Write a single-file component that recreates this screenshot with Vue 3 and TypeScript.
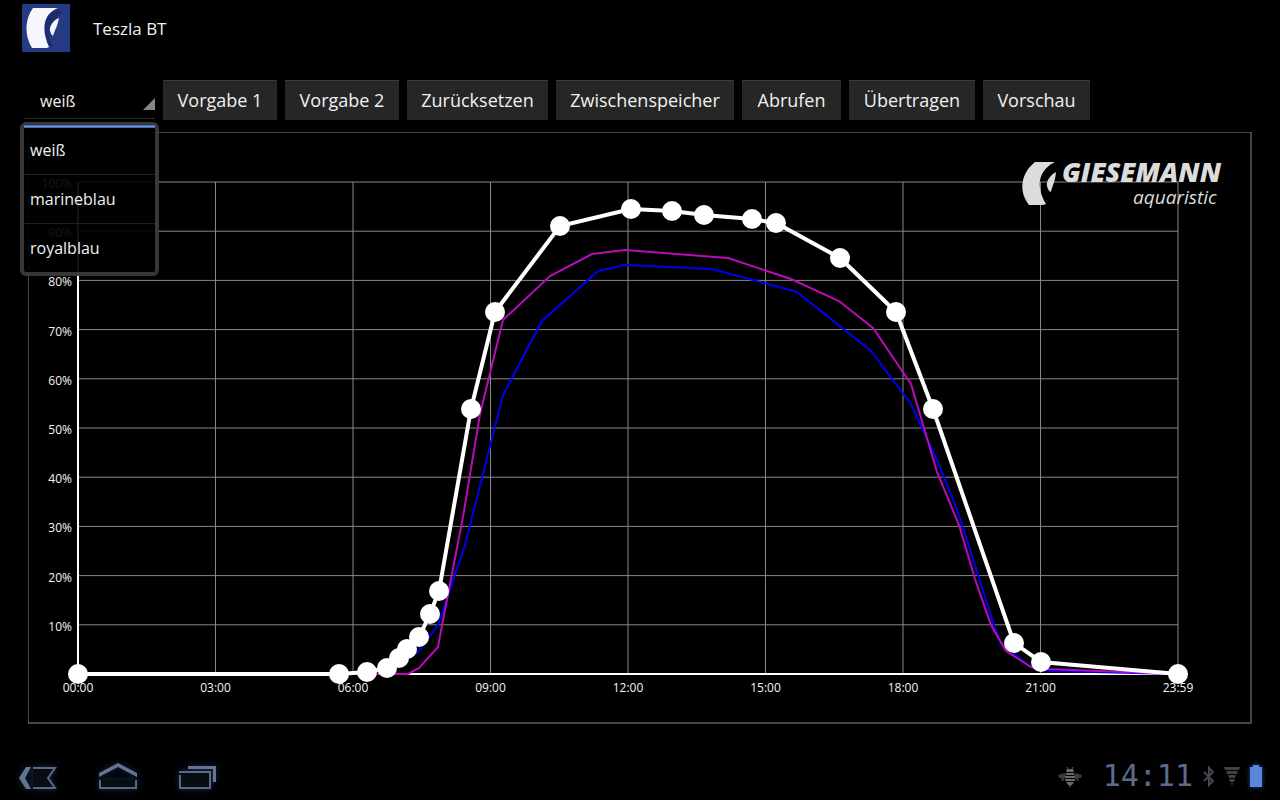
<script setup lang="ts">
import { ref } from 'vue'

type Point = [number, number]

const channels = ['weiß', 'marineblau', 'royalblau']
const selected = ref('weiß')
const open = ref(true)

const actions = [
  'Vorgabe 1',
  'Vorgabe 2',
  'Zurücksetzen',
  'Zwischenspeicher',
  'Abrufen',
  'Übertragen',
  'Vorschau',
]

// Plot area inside the 1224 x 592 chart surface
const left = 50
const top = 50
const plotWidth = 1100
const plotHeight = 492

const hours = ['00:00', '03:00', '06:00', '09:00', '12:00', '15:00', '18:00', '21:00', '23:59']
const columns = hours.map((label, i) => ({ label, x: left + (plotWidth / 8) * i }))
const rows = Array.from({ length: 10 }, (_, i) => ({
  label: `${100 - i * 10}%`,
  y: top + (plotHeight / 10) * i,
}))

const white: Point[] = [
  [50, 542], [311, 542], [339, 540], [359, 536], [371, 526], [379, 517], [391, 505],
  [402, 482], [411, 459], [443, 277], [467, 180], [532, 94], [603, 77], [644, 79],
  [676, 83], [724, 87], [748, 91], [812, 126], [868, 180], [905, 277], [986, 511],
  [1013, 530], [1150, 542],
]
const marine: Point[] = [
  [50, 542], [339, 541], [371, 530], [389, 521], [410, 493], [437, 413], [475, 263],
  [514, 189], [570, 139], [597, 133], [684, 137], [769, 160], [843, 219], [883, 272],
  [909, 328], [930, 380], [965, 490], [973, 512], [1003, 535], [1022, 539], [1150, 542],
]
const royal: Point[] = [
  [50, 542], [380, 542], [391, 536], [410, 515], [416, 483], [435, 385], [452, 282],
  [475, 188], [522, 144], [564, 122], [597, 118], [700, 126], [763, 147], [811, 169],
  [845, 196], [883, 252], [909, 340], [931, 393], [947, 447], [963, 493], [978, 519],
  [1003, 535], [1018, 537], [1150, 542],
]

const line = (points: Point[]) => points.map((p) => p.join(',')).join(' ')

function pick(name: string) {
  selected.value = name
  open.value = false
}
</script>

<template>
  <div class="app">
    <header class="header">
      <svg class="app-icon" viewBox="0 0 48 48" aria-hidden="true">
        <rect width="48" height="48" fill="#263a83" />
        <path d="M36 5C22 11 19 24 28 43L31 42C24 30 26 19 40 9Z" fill="#1d2c6a" />
        <path d="M11 4H36C23 9 18 22 27 43Q26 44 24 44H10C2 31 3 15 11 4Z" fill="#f5f7fc" />
        <path d="M37 14C31 16 27 23 28 27Q29 31 31 32C33 25 35 24 37 14Z" fill="#f5f7fc" />
      </svg>
      <h1 class="title">Teszla BT</h1>
    </header>

    <div class="toolbar">
      <div class="spinner">
        <select v-model="selected" class="spinner-select" aria-label="Kanal" @mousedown.prevent="open = !open">
          <option v-for="name in channels" :key="name" :value="name">{{ name }}</option>
        </select>
        <div v-if="open" class="menu">
          <button v-for="name in channels" :key="name" type="button" class="menu-item" @click="pick(name)">
            {{ name }}
          </button>
        </div>
      </div>
      <button v-for="action in actions" :key="action" type="button" class="action">{{ action }}</button>
    </div>

    <main class="main">
      <svg class="chart" viewBox="0 0 1224 592" role="img" aria-label="Tagesverlauf">
        <rect class="grid" width="1223" height="591" />
        <line v-for="c in columns" :key="c.label" class="grid" :x1="c.x" :x2="c.x" :y1="top" :y2="top + plotHeight" />
        <line v-for="r in rows" :key="r.label" class="grid" :x1="left" :x2="left + plotWidth" :y1="r.y" :y2="r.y" />
        <g class="brand">
          <path d="M1007 30H1027C1011 38 1007 53 1018 72L1015 73H1001C990 59 993 41 1007 30Z" />
          <path d="M1028 40C1021 44 1018 50 1019 54Q1020 59 1023 60C1024 54 1027 51 1028 40Z" />
          <text class="brand-name" x="1034" y="50">GIESEMANN</text>
          <text class="brand-sub" x="1105" y="72">aquaristic</text>
        </g>
        <text v-for="r in rows" :key="r.label" class="label row-label" :x="left - 6" :y="r.y + 6">{{ r.label }}</text>
        <text v-for="c in columns" :key="c.label" class="label column-label" :x="c.x" :y="top + plotHeight + 18">{{ c.label }}</text>
        <polyline class="axis" points="50,50 50,542 1150,542" />
        <polyline class="curve marine" :points="line(marine)" />
        <polyline class="curve royal" :points="line(royal)" />
        <polyline class="curve white" :points="line(white)" />
        <circle v-for="([x, y], i) in white" :key="i" :cx="x" :cy="y" r="10" fill="#fff" />
      </svg>
    </main>

    <footer class="system-bar">
      <nav class="keys">
        <button type="button" class="key" aria-label="Zurück">
          <svg viewBox="0 0 48 48">
            <path class="solid" d="M12 15H17L11 26L17 37H12L5 26Z" />
            <path class="outline" d="M19 16H41L34 26L41 36H19" />
          </svg>
        </button>
        <button type="button" class="key" aria-label="Startseite">
          <svg viewBox="0 0 48 48">
            <path class="solid" d="M24 11L43 21V25L24 15L5 25V21Z" />
            <path class="outline" d="M6 28V36H42V28" />
          </svg>
        </button>
        <button type="button" class="key" aria-label="Letzte Apps">
          <svg viewBox="0 0 48 48">
            <path class="solid" d="M14 14H42V30H39V17H14Z" />
            <path class="outline" d="M5 20H36V36H6V23" />
          </svg>
        </button>
      </nav>
      <div class="status">
        <svg class="bee" viewBox="0 0 24 24" aria-hidden="true">
          <path d="M9 3L10 5M15 3L14 5" stroke="#5a5d61" stroke-width="1" />
          <path d="M9 5H15L16 8H8Z" fill="#66696d" />
          <path d="M7 9L0 11L1 14H4L3 17H5L8 12ZM17 9L24 11L23 14H20L21 17H19L16 12Z" fill="#393b3e" />
          <path d="M8 9H16V11H8ZM7 12H17V14H7ZM7 15H17V17H7ZM8 18H16L14 21H13L12 24L11 21H10Z" fill="#66696d" />
        </svg>
        <time class="clock">14:11</time>
        <svg class="bluetooth" viewBox="0 0 14 24" aria-hidden="true">
          <path d="M3 8L12 17L8 21V4L12 8L3 17" fill="none" stroke="#45484e" stroke-width="2" />
        </svg>
        <svg class="signal" viewBox="0 0 18 24" aria-hidden="true">
          <path d="M1 3H17L16 6H2ZM3 7H15L14 10H4ZM5 11H13L12 14H6ZM6 15H12L11 18H7ZM8 19H10L9 22Z" fill="#3e4044" />
        </svg>
        <svg class="battery" viewBox="0 0 14 24" aria-hidden="true">
          <path d="M4 1H10V3H13V23H1V3H4Z" fill="#5e86d8" />
        </svg>
      </div>
    </footer>
  </div>
</template>

<style>
body {
  margin: 0;
  background: #000;
}
</style>

<style scoped>
.app {
  display: flex;
  flex-direction: column;
  min-height: 100vh;
  background: #000;
  color: #f0f0f0;
  font-family: "Open Sans", "Noto Sans", sans-serif;
}

button,
select {
  margin: 0;
  border: 0;
  border-radius: 0;
  background: none;
  color: inherit;
  font-family: inherit;
}

.header {
  display: flex;
  align-items: center;
  gap: 23px;
  height: 56px;
  padding: 0 22px;
}

.app-icon {
  width: 48px;
  height: 48px;
}

.title {
  margin: 0;
  font-size: 17px;
  font-weight: 400;
}

.toolbar {
  display: grid;
  grid-template-columns: 131px 114px 114px 141px 178px 99px 126px 107px;
  gap: 8px;
  margin-top: 24px;
  padding: 0 24px;
}

.spinner {
  position: relative;
  height: 40px;
}

.spinner::after {
  content: "";
  position: absolute;
  right: 0;
  bottom: 10px;
  border-left: 12px solid transparent;
  border-bottom: 12px solid #858585;
  pointer-events: none;
}

.spinner-select {
  appearance: none;
  width: 100%;
  height: 39px;
  padding: 4px 16px 0;
  border-bottom: 1px solid #2c2c2c;
  font-size: 16px;
}

.spinner-select option {
  background: #000;
}

.menu {
  position: absolute;
  top: 42px;
  left: -4px;
  right: -4px;
  z-index: 1;
  padding-top: 1px;
  border: 4px solid rgba(58, 58, 58, 0.95);
  border-top-width: 3px;
  border-radius: 6px;
  background: rgba(0, 0, 0, 0.92);
  background-clip: padding-box;
}

.menu::before {
  content: "";
  position: absolute;
  top: 0;
  left: 0;
  right: 0;
  height: 3px;
  background: linear-gradient(#34548f, #6c97ea, #34548f);
}

.menu-item {
  display: block;
  width: 100%;
  height: 49px;
  padding: 0 6px;
  border-bottom: 1px solid #202020;
  font-size: 16px;
  text-align: left;
}

.menu-item:last-child {
  height: 48px;
  border-bottom: 0;
}

.action {
  height: 40px;
  padding: 0 0 2px;
  border-top: 1px solid #3c3c3c;
  background: #262626;
  font-size: 18px;
  white-space: nowrap;
}

.main {
  margin: 12px 28px 28px;
}

.chart {
  display: block;
  width: 100%;
  height: auto;
}

.grid {
  fill: none;
  stroke: #888;
  stroke-width: 1;
}

.axis {
  fill: none;
  stroke: #fff;
  stroke-width: 2;
}

.label {
  fill: #f4f4f4;
  font-size: 12px;
}

.row-label {
  text-anchor: end;
}

.column-label {
  text-anchor: middle;
}

.curve {
  fill: none;
  stroke-width: 2;
}

.white {
  stroke: #fff;
  stroke-width: 4;
}

.marine {
  stroke: #0000f0;
}

.royal {
  stroke: #b80cb8;
}

.brand {
  fill: #dcdcdc;
}

.brand-name {
  font-size: 27px;
  font-style: italic;
  font-weight: 800;
}

.brand-sub {
  font-size: 19px;
  font-style: italic;
}

.system-bar {
  display: flex;
  align-items: center;
  justify-content: space-between;
  height: 48px;
  margin-top: auto;
  padding: 0 17px 0 14px;
}

.keys {
  display: flex;
  gap: 32px;
}

.key {
  width: 48px;
  height: 48px;
  padding: 0;
}

.key svg {
  display: block;
  filter: drop-shadow(0 0 3px #152b56);
}

.solid {
  fill: #66748f;
}

.outline {
  fill: #090c13;
  stroke: #5c6880;
  stroke-width: 2;
}

.status {
  display: flex;
  align-items: center;
  gap: 8px;
}

.bee {
  width: 24px;
  height: 24px;
}

.bluetooth,
.battery {
  width: 14px;
  height: 24px;
}

.signal {
  width: 18px;
  height: 24px;
}

.battery {
  filter: drop-shadow(0 0 2px #1e4cae);
}

.clock {
  width: 103px;
  color: #5c6b8c;
  font-family: "DejaVu Sans Mono", monospace;
  font-size: 30px;
  line-height: 48px;
  text-align: right;
}
</style>
